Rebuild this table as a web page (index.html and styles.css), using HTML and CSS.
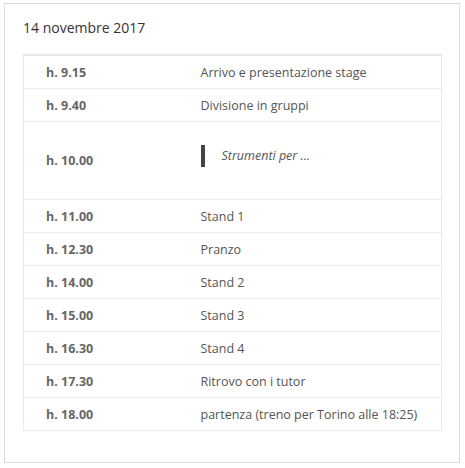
FILE: index.html
```html
<!DOCTYPE html>
<html lang="it">
<head>
<meta charset="utf-8">
<title>Programma</title>
<link rel="stylesheet" href="styles.css">
</head>
<body>
<div class="box">
  <h3 class="title">14 novembre 2017</h3>
  <table class="agenda">
    <tr><td class="time">h. 9.15</td><td class="desc">Arrivo e presentazione stage</td></tr>
    <tr><td class="time">h. 9.40</td><td class="desc">Divisione in gruppi</td></tr>
    <tr class="tall"><td class="time">h. 10.00</td><td class="desc"><blockquote class="quote">Strumenti per ...</blockquote></td></tr>
    <tr><td class="time">h. 11.00</td><td class="desc">Stand 1</td></tr>
    <tr><td class="time">h. 12.30</td><td class="desc">Pranzo</td></tr>
    <tr><td class="time">h. 14.00</td><td class="desc">Stand 2</td></tr>
    <tr><td class="time">h. 15.00</td><td class="desc">Stand 3</td></tr>
    <tr><td class="time">h. 16.30</td><td class="desc">Stand 4</td></tr>
    <tr><td class="time">h. 17.30</td><td class="desc">Ritrovo con i tutor</td></tr>
    <tr><td class="time">h. 18.00</td><td class="desc">partenza (treno per Torino alle 18:25)</td></tr>
  </table>
</div>
</body>
</html>
```

FILE: styles.css
```css
* { box-sizing: border-box; }
html, body { margin: 0; padding: 0; background: #fff; }
body {
  font-family: "Open Sans", "Liberation Sans", sans-serif;
  color: #555;
  padding: 3px 5px 5px 4px;
}
.box {
  width: 456px;
  height: 460px;
  border: 1px solid #dcdcdc;
  padding: 13px 18px 0 18px;
}
.title {
  margin: 0 0 15px 0;
  font-size: 14px;
  font-weight: 400;
  color: #333;
  line-height: 22px;
}
.agenda {
  width: 419px;
  border-collapse: collapse;
  border: 1px solid #e8e8e8;
  border-top: 2px solid #e8e8e8;
  font-size: 12.5px;
}
.agenda td {
  border-bottom: 1px solid #ececec;
  height: 33px;
  padding: 1px 0 0 0;
  vertical-align: middle;
}
.agenda .time {
  width: 177px;
  padding-left: 22px;
  font-weight: 700;
  color: #666;
}
.agenda .desc {
  color: #555;
}
.agenda .tall td { height: 78px; }
.quote {
  margin: 0 0 9px 0;
  border-left: 4px solid #444;
  padding-left: 17px;
  line-height: 22px;
  font-style: italic;
  font-size: 12.5px;
  color: #555;
}
```
